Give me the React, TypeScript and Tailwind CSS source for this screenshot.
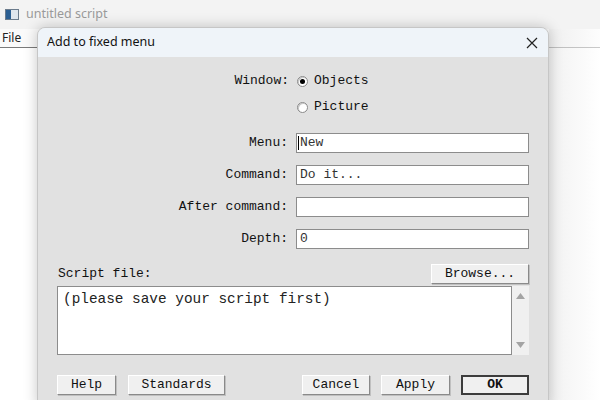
import type { ReactNode } from "react";

const mono = "font-['Liberation_Mono','Courier_New',monospace]";
const ui = "font-['Noto_Sans','Open_Sans',sans-serif]";

function Radio({ checked, label }: { checked?: boolean; label: string }) {
  return (
    <div className="flex items-center gap-[6px] h-[20px]">
      <span className="w-[11px] h-[11px] rounded-full border border-[#8a8a8a] bg-white flex items-center justify-center shadow-[inset_1px_1px_0_#c8c8c8]">
        {checked && <span className="w-[5px] h-[5px] rounded-full bg-black" />}
      </span>
      <span>{label}</span>
    </div>
  );
}

function Field({ label, value, caret }: { label: string; value: string; caret?: boolean }) {
  return (
    <div className="flex items-center h-[20px]">
      <div className="w-[232px] text-right pr-[1px]">{label}</div>
      <div className="ml-[7px] w-[233px] h-[20px] bg-white border border-[#8c8c8c] flex items-center pl-[3px] relative">
        {caret && <span className="absolute left-[1px] top-[2px] w-px h-[14px] bg-black" />}
        <span className="text-[#333]">{value}</span>
      </div>
    </div>
  );
}

function Btn({ children, w, def }: { children: ReactNode; w: number; def?: boolean }) {
  return (
    <div
      className={`h-[20px] flex items-center justify-center bg-[#f0f0f0] ${
        def
          ? "border-2 border-[#3c3c3c] font-bold"
          : "border border-t-white border-l-white border-r-[#8a8a8a] border-b-[#8a8a8a] shadow-[1px_1px_0_#c0c0c0]"
      }`}
      style={{ width: w }}
    >
      {children}
    </div>
  );
}

export default function App() {
  return (
    <div className="relative w-[600px] h-[400px] overflow-hidden bg-white">
      {/* background window */}
      <div className={`h-[29px] bg-[#f3f3f3] flex items-center gap-[7px] pl-[5px] ${ui}`}>
        <span className="w-[14px] h-[11px] border border-[#6b7b8c] bg-[#dfe6ee] flex">
          <span className="w-[5px] h-full bg-[#2b5f93]" />
        </span>
        <span className="text-[12.5px] text-[#9a9a9a]">untitled script</span>
      </div>
      <div className={`h-[19px] bg-[#fafafa] border-b border-[#7a7a7a] flex items-center pl-[2px] text-[12px] text-[#222] ${ui}`}>
        File
      </div>
      <div className="absolute right-0 top-[29px] w-[51px] h-[371px] bg-gradient-to-r from-[#e8e8e8] to-white opacity-60" />

      {/* dialog */}
      <div className="absolute left-[37px] top-[27px] w-[512px] h-[380px] rounded-t-[8px] overflow-hidden border border-[#c6c6c6] shadow-[0_0_14px_rgba(0,0,0,0.22)] bg-[#e1e1e1] flex flex-col">
        <div className={`h-[29px] bg-[#eff4f9] flex items-center justify-between pl-[9px] pr-[9px] text-[12.5px] text-[#111] ${ui}`}>
          <span>Add to fixed menu</span>
          <svg width="12" height="12" viewBox="0 0 12 12" className="mr-[1px]">
            <path d="M1 1L11 11M11 1L1 11" stroke="#222" strokeWidth="1.2" />
          </svg>
        </div>
        <div className={`flex-1 px-[19px] text-[13px] text-[#111] ${mono}`}>
          <div className="flex mt-[14px]">
            <div className="w-[232px] text-right h-[20px] leading-[20px]">Window:</div>
            <div className="ml-[8px] flex flex-col gap-[6px]">
              <Radio checked label="Objects" />
              <Radio label="Picture" />
            </div>
          </div>
          <div className="mt-[16px] flex flex-col gap-[12px]">
            <Field label="Menu:" value="New" caret />
            <Field label="Command:" value="Do it..." />
            <Field label="After command:" value="" />
            <Field label="Depth:" value="0" />
          </div>
          <div className="mt-[15px] flex items-center justify-between h-[19px]">
            <span className="ml-[1px]">Script file:</span>
            <Btn w={98}>Browse...</Btn>
          </div>
          <div className="mt-[3px] flex h-[69px]">
            <div className="flex-1 bg-white border border-[#8c8c8c] px-[5px] pt-[2px] text-[14.4px] text-[#222]">
              (please save your script first)
            </div>
            <div className="w-[17px] bg-[#f0f0f0] flex flex-col items-center justify-between py-[7px]">
              <svg width="9" height="6" viewBox="0 0 9 6">
                <path d="M0 6L4.5 0L9 6Z" fill="#a3a3a3" />
              </svg>
              <svg width="9" height="6" viewBox="0 0 9 6">
                <path d="M0 0L4.5 6L9 0Z" fill="#a3a3a3" />
              </svg>
            </div>
          </div>
          <div className="mt-[20px] flex items-center">
            <Btn w={59}>Help</Btn>
            <div className="ml-[12px]">
              <Btn w={97}>Standards</Btn>
            </div>
            <div className="ml-auto flex gap-[11px]">
              <Btn w={68}>Cancel</Btn>
              <Btn w={69}>Apply</Btn>
              <Btn w={68} def>
                OK
              </Btn>
            </div>
          </div>
        </div>
      </div>
    </div>
  );
}
